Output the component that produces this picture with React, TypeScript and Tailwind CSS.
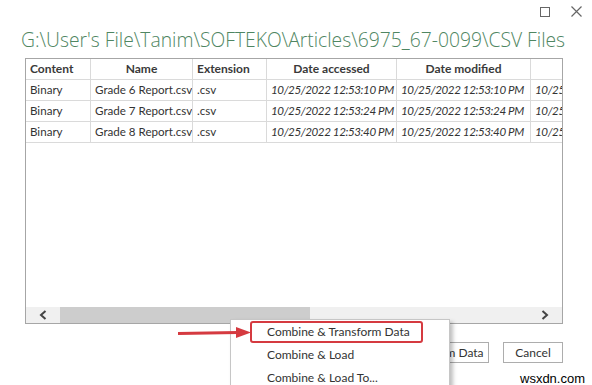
import React from 'react';

const cols = [65, 102, 74, 130, 134, 140];

const rows = [
  ['Binary', 'Grade 6 Report.csv', '.csv', '10/25/2022 12:53:10 PM', '10/25/2022 12:53:10 PM', '10/25/2022 12:53:10 PM'],
  ['Binary', 'Grade 7 Report.csv', '.csv', '10/25/2022 12:53:24 PM', '10/25/2022 12:53:24 PM', '10/25/2022 12:53:24 PM'],
  ['Binary', 'Grade 8 Report.csv', '.csv', '10/25/2022 12:53:40 PM', '10/25/2022 12:53:40 PM', '10/25/2022 12:53:40 PM'],
];

const headers: { label: string; align: string }[] = [
  { label: 'Content', align: 'justify-start pl-[4px]' },
  { label: 'Name', align: 'justify-center' },
  { label: 'Extension', align: 'justify-start pl-[4px]' },
  { label: 'Date accessed', align: 'justify-center' },
  { label: 'Date modified', align: 'justify-center' },
  { label: 'Date created', align: 'justify-center' },
];

const Chevron = ({ dir }: { dir: 'left' | 'right' }) => (
  <svg width="8" height="10" viewBox="0 0 8 10">
    <path
      d={dir === 'left' ? 'M6.5 1 L2 5 L6.5 9' : 'M1.5 1 L6 5 L1.5 9'}
      fill="none"
      stroke="#444"
      strokeWidth="2"
    />
  </svg>
);

export default function App() {
  return (
    <div className="relative w-[592px] h-[385px] overflow-hidden bg-white text-[#333] font-['Lato','Noto_Sans',sans-serif]">
      {/* window controls */}
      <div className="flex justify-end items-center h-[23px] pr-[10px] gap-[21px]">
        <div className="w-[10px] h-[10px] border border-[#666]" />
        <svg width="11" height="11" viewBox="0 0 11 11">
          <path d="M0.5 0.5 L10.5 10.5 M10.5 0.5 L0.5 10.5" stroke="#666" strokeWidth="1.2" />
        </svg>
      </div>

      <div className="pl-[21px] pt-[3px] h-[35px] text-[19.3px] leading-[28px] font-light text-[#4f8662] font-['Open_Sans',sans-serif] whitespace-nowrap">
        G:\User's File\Tanim\SOFTEKO\Articles\6975_67-0099\CSV Files
      </div>

      {/* table */}
      <div className="ml-[25px] w-[538px] h-[266px] border border-[#a6a6a6] flex flex-col">
        <div className="flex-1 overflow-hidden">
          <div className="flex h-[21px] border-b border-[#dadada] font-bold text-[12px] text-[#3a3a3a]">
            {headers.map((h, i) => (
              <div
                key={h.label}
                style={{ width: cols[i] }}
                className={`shrink-0 flex items-center border-r border-[#dadada] whitespace-nowrap ${h.align}`}
              >
                {h.label}
              </div>
            ))}
          </div>
          {rows.map((r, ri) => (
            <div key={ri} className="flex h-[21px] border-b border-[#dadada] text-[11.6px]">
              {r.map((c, i) => (
                <div
                  key={i}
                  style={{ width: cols[i] }}
                  className={`shrink-0 flex items-center pl-[4px] border-r border-[#dadada] whitespace-nowrap overflow-hidden ${i >= 3 ? 'italic tracking-[-0.4px]' : ''}`}
                >
                  {c}
                </div>
              ))}
            </div>
          ))}
        </div>
        {/* horizontal scrollbar */}
        <div className="flex h-[16px] bg-[#f0f0f0] items-center">
          <div className="w-[34px] flex justify-center">
            <Chevron dir="left" />
          </div>
          <div className="w-[250px] h-full bg-[#cdcdcd]" />
          <div className="flex-1" />
          <div className="w-[34px] flex justify-center">
            <Chevron dir="right" />
          </div>
        </div>
      </div>

      {/* buttons */}
      <div className="flex justify-end gap-[14px] pr-[29px] mt-[18px] text-[12px]">
        <div className="w-[92px] h-[21px] border border-[#adadad] flex items-center justify-center">Transform Data</div>
        <div className="w-[60px] h-[21px] border border-[#adadad] flex items-center justify-center">Cancel</div>
      </div>

      {/* dropdown menu */}
      <div className="absolute left-[230px] top-[319px] w-[220px] h-[80px] bg-white border border-[#c6c6c6] shadow-[3px_3px_4px_rgba(0,0,0,0.25)] pt-[1px] text-[12px] text-[#333] whitespace-nowrap">
        <div className="ml-[19px] mr-[26px] h-[22px] flex items-center pl-[15px] border-[2.5px] border-[#d53a40] rounded-[3px]">
          Combine &amp; Transform Data
        </div>
        <div className="h-[23px] flex items-center pl-[36px]">Combine &amp; Load</div>
        <div className="h-[23px] flex items-center pl-[36px]">Combine &amp; Load To...</div>
      </div>

      {/* red arrow */}
      <svg className="absolute left-[176px] top-[326px]" width="76" height="14" viewBox="0 0 76 14">
        <path d="M2 7.5 L62 6.5" stroke="#d53a40" strokeWidth="3" />
        <path d="M60 1 L75 6.5 L60 12 Z" fill="#d53a40" />
      </svg>

      <div className="absolute left-[520px] top-[369px] text-[13px] text-black font-['Liberation_Sans',sans-serif]">
        wsxdn.com
      </div>
    </div>
  );
}
